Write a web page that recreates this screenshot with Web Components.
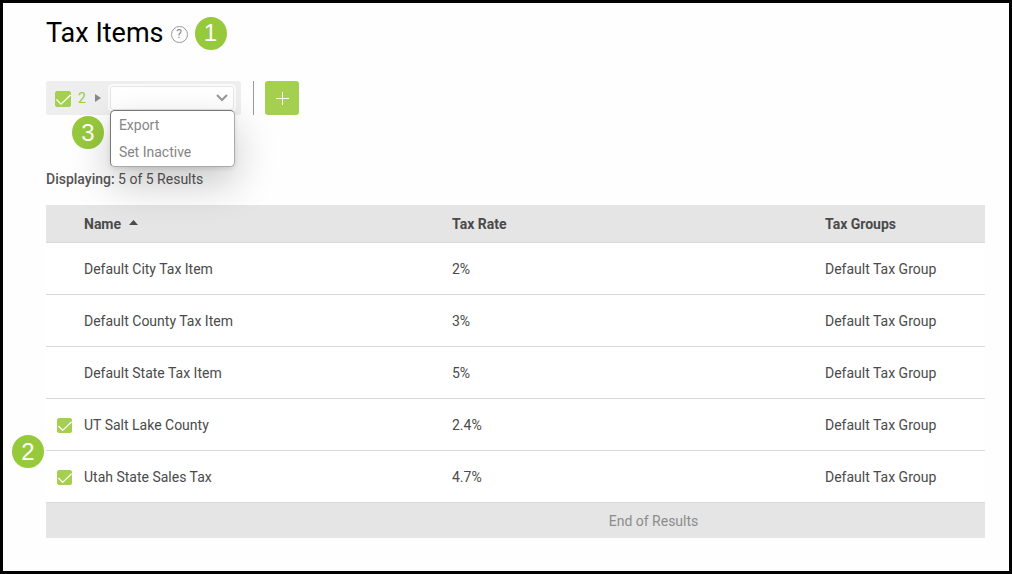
<!DOCTYPE html>
<html lang="en">
<head>
<meta charset="utf-8">
<title>Tax Items</title>
<style>
  body {
    margin: 0;
    font-family: Roboto, "Liberation Sans", sans-serif;
    font-size: 14px;
    line-height: 20px;
    color: #4a4a4a;
    background: #fefefe;
  }
</style>
</head>
<body>
<tax-page></tax-page>

<script>
class StepBadge extends HTMLElement {
  constructor() {
    super();
    const shadow = this.attachShadow({ mode: "open" });
    shadow.innerHTML = `
      <style>
        :host {
          display: inline-flex;
          align-items: center;
          justify-content: center;
          box-sizing: border-box;
          width: 32px;
          height: 33px;
          border-radius: 50%;
          background: #97c93d;
          color: #fff;
          font: 24px/32px "Liberation Sans", sans-serif;
        }
      </style>
      <slot></slot>
    `;
  }
}

class CheckBox extends HTMLElement {
  constructor() {
    super();
    const shadow = this.attachShadow({ mode: "open" });
    shadow.innerHTML = `
      <style>
        :host {
          display: inline-grid;
          width: var(--box-size, 15px);
          height: var(--box-size, 15px);
        }
        input, svg {
          grid-area: 1 / 1;
          width: 100%;
          height: 100%;
          margin: 0;
        }
        input {
          appearance: none;
          border: 1px solid #a5cf4f;
          border-radius: 2px;
          background: #fff;
        }
        input:checked {
          background: #a5cf4f;
        }
        svg {
          pointer-events: none;
          fill: none;
          stroke: #fff;
          stroke-width: 1.3;
        }
      </style>
      <input type="checkbox" checked>
      <svg viewBox="0 0 16 16"><path d="M1.5 8.5 6 13.2 15.6 4"/></svg>
    `;
    shadow.querySelector("input").setAttribute("aria-label", this.getAttribute("label") || "Select");
  }
}

class ActionSelect extends HTMLElement {
  constructor() {
    super();
    const shadow = this.attachShadow({ mode: "open" });
    shadow.innerHTML = `
      <style>
        :host {
          display: block;
          position: relative;
          width: 128px;
        }
        .field {
          display: grid;
          align-items: center;
        }
        select, .field svg {
          grid-area: 1 / 1;
        }
        select {
          appearance: none;
          width: 100%;
          height: 28px;
          border: 2px solid #fafafa;
          border-radius: 5px;
          outline: 1px solid #e6e6e6;
          outline-offset: -3px;
          background: #fff;
          font: inherit;
          color: #8a8a8a;
        }
        .field svg {
          justify-self: end;
          margin-right: 8px;
          pointer-events: none;
          fill: none;
          stroke: #999;
          stroke-width: 2;
        }
        .menu {
          position: absolute;
          z-index: 2;
          top: 26px;
          left: 2px;
          right: 1px;
          box-sizing: border-box;
          height: 57px;
          border: 1px solid #9a9a9a;
          border-color: #777 #aaa #aaa #777;
          border-radius: 5px;
          background: #fff;
          box-shadow: 0 2px 4px rgba(0, 0, 0, 0.1), 0 16px 40px rgba(0, 0, 0, 0.22);
        }
        .menu button {
          display: block;
          width: 100%;
          height: 27px;
          padding: 0 8px;
          border: 0;
          background: none;
          font: inherit;
          color: #858585;
          text-align: left;
        }
      </style>
      <div class="field">
        <select aria-label="Action"><option></option></select>
        <svg width="12" height="8" viewBox="0 0 12 8"><path d="M1 1 6 6 11 1"/></svg>
      </div>
      <div class="menu"></div>
    `;
    const menu = shadow.querySelector(".menu");
    this.getAttribute("options").split(",").forEach((name) => {
      const button = document.createElement("button");
      button.type = "button";
      button.textContent = name;
      menu.appendChild(button);
    });
  }
}

class TaxToolbar extends HTMLElement {
  constructor() {
    super();
    const shadow = this.attachShadow({ mode: "open" });
    shadow.innerHTML = `
      <style>
        :host {
          display: flex;
          position: relative;
          height: 34px;
        }
        .selection {
          display: flex;
          align-items: center;
          box-sizing: border-box;
          width: 195px;
          padding-left: 9px;
          border-radius: 2px;
          background: #eee;
        }
        check-box {
          --box-size: 16px;
          margin: 2px 7px 0 0;
        }
        .count {
          color: #97c93d;
        }
        .arrow {
          margin: 0 7px 0 9px;
          fill: #888;
        }
        .divider {
          width: 1px;
          margin: 0 11px 0 12px;
          background: #999;
        }
        .add {
          display: grid;
          place-items: center;
          width: 34px;
          padding: 0;
          border: 0;
          border-radius: 3px;
          background: #a5cf4f;
        }
        .add svg {
          stroke: #fff;
          stroke-width: 1;
        }
        step-badge {
          position: absolute;
          top: 35px;
          left: 26px;
        }
      </style>
      <div class="selection">
        <check-box label="Select all"></check-box>
        <span class="count">2</span>
        <svg class="arrow" width="6" height="8" viewBox="0 0 6 8"><path d="M0 0 6 4 0 8z"/></svg>
        <action-select options="Export,Set Inactive"></action-select>
      </div>
      <span class="divider"></span>
      <button class="add" type="button" aria-label="Add tax item">
        <svg width="13" height="13" viewBox="0 0 13 13"><path d="M6.5 0V13M0 6.5H13"/></svg>
      </button>
      <step-badge>3</step-badge>
    `;
  }
}

class TaxTable extends HTMLElement {
  constructor() {
    super();
    const shadow = this.attachShadow({ mode: "open" });
    shadow.innerHTML = `
      <style>
        :host {
          display: block;
        }
        table {
          width: 100%;
          table-layout: fixed;
          border-collapse: separate;
          border-spacing: 0;
        }
        .col-check { width: 38px; }
        .col-name { width: 368px; }
        .col-rate { width: 373px; }
        .col-groups { width: 160px; }
        th, td {
          box-sizing: border-box;
          height: 52px;
          padding: 0;
          border-bottom: 1px solid #d9d9d9;
          text-align: left;
        }
        th {
          height: 38px;
          background: #e5e5e5;
          font-weight: 700;
        }
        th svg {
          margin-left: 4px;
          vertical-align: 4px;
          fill: #4a4a4a;
        }
        td {
          background: #fff;
        }
        .check {
          position: relative;
          padding-left: 11px;
        }
        check-box {
          vertical-align: middle;
        }
        step-badge {
          position: absolute;
          top: 36px;
          left: -34px;
        }
        tfoot td {
          height: 35px;
          padding-left: 276px;
          border: 0;
          background: #e5e5e5;
          color: #8c8c8c;
          text-align: center;
        }
      </style>
      <table>
        <colgroup>
          <col class="col-check"><col class="col-name"><col class="col-rate"><col class="col-groups">
        </colgroup>
        <thead>
          <tr>
            <th></th>
            <th>Name <svg width="9" height="5" viewBox="0 0 9 5"><path d="M0 5 4.5 0 9 5z"/></svg></th>
            <th>Tax Rate</th>
            <th>Tax Groups</th>
          </tr>
        </thead>
        <tbody></tbody>
        <tfoot>
          <tr><td colspan="4">End of Results</td></tr>
        </tfoot>
      </table>
    `;
  }

  set items(items) {
    this.shadowRoot.querySelector("tbody").innerHTML = items.map((item) => `
      <tr>
        <td class="check">
          ${item.selected ? `<check-box label="${item.name}"></check-box>` : ""}
          ${item.step ? `<step-badge>${item.step}</step-badge>` : ""}
        </td>
        <td>${item.name}</td>
        <td>${item.rate}</td>
        <td>${item.group}</td>
      </tr>
    `).join("");
  }
}

class TaxPage extends HTMLElement {
  constructor() {
    super();
    const shadow = this.attachShadow({ mode: "open" });
    shadow.innerHTML = `
      <style>
        :host {
          display: block;
          box-sizing: border-box;
          min-height: 100vh;
          padding: 12px 24px 24px 43px;
          border: 3px solid #000;
        }
        header {
          display: flex;
          align-items: center;
          height: 36px;
          margin-bottom: 30px;
        }
        h1 {
          margin: 0 7px 0 0;
          font-size: 27px;
          line-height: 32px;
          font-weight: 400;
          color: #000;
        }
        .help {
          display: grid;
          margin: 2px 7px 0 0;
          box-sizing: border-box;
          width: 17px;
          height: 17px;
          place-items: center;
          border: 1px solid #999;
          border-radius: 50%;
          font-size: 12px;
          line-height: 14px;
          color: #888;
          text-decoration: none;
        }
        .results {
          margin: 54px 0 16px;
          color: #555;
        }
        .results b {
          font-weight: 500;
        }
      </style>
      <header>
        <h1>Tax Items</h1>
        <a class="help" href="#help" title="Help">?</a>
        <step-badge>1</step-badge>
      </header>
      <tax-toolbar></tax-toolbar>
      <p class="results"><b>Displaying:</b> 5 of 5 Results</p>
      <tax-table></tax-table>
    `;
    shadow.querySelector("tax-table").items = [
      { name: "Default City Tax Item", rate: "2%", group: "Default Tax Group" },
      { name: "Default County Tax Item", rate: "3%", group: "Default Tax Group" },
      { name: "Default State Tax Item", rate: "5%", group: "Default Tax Group" },
      { name: "UT Salt Lake County", rate: "2.4%", group: "Default Tax Group", selected: true, step: 2 },
      { name: "Utah State Sales Tax", rate: "4.7%", group: "Default Tax Group", selected: true },
    ];
  }
}

window.customElements.define("step-badge", StepBadge);
window.customElements.define("check-box", CheckBox);
window.customElements.define("action-select", ActionSelect);
window.customElements.define("tax-toolbar", TaxToolbar);
window.customElements.define("tax-table", TaxTable);
window.customElements.define("tax-page", TaxPage);
</script>
</body>
</html>
